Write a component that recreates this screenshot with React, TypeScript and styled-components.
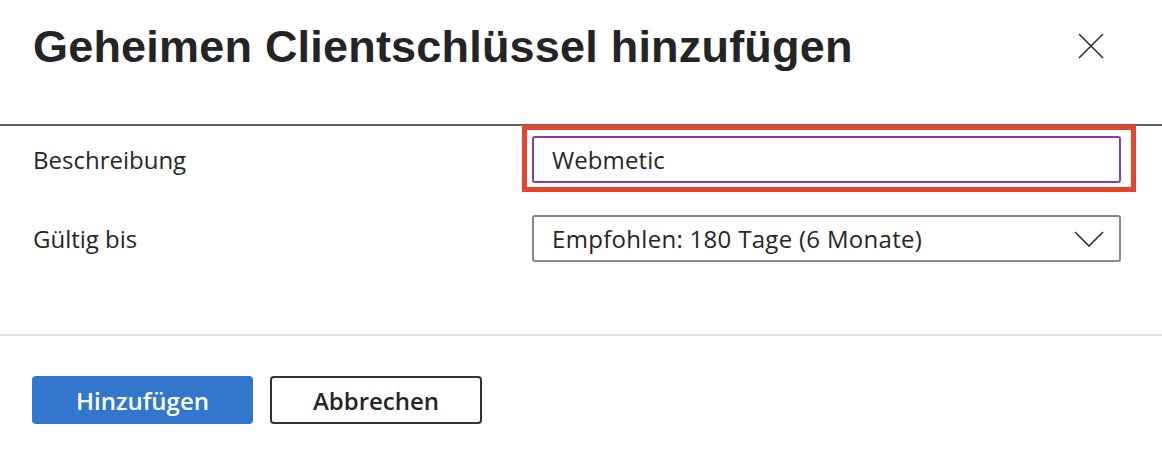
import React from "react";
import styled, { createGlobalStyle } from "styled-components";

const GlobalStyle = createGlobalStyle`
  html, body {
    margin: 0;
    padding: 0;
    background: #fff;
  }
  body {
    font-family: "Open Sans", "Noto Sans", sans-serif;
    color: #323130;
  }
`;

const Panel = styled.div`
  width: 1162px;
  height: 464px;
  background: #fff;
  overflow: hidden;
`;

const Header = styled.header`
  height: 126px;
  display: flex;
  align-items: flex-start;
  justify-content: space-between;
  padding: 0 58px 0 33px;
  box-sizing: border-box;
  border-bottom: 2px solid #626262;
`;

const Title = styled.h1`
  margin: 21px 0 0;
  font-family: "Liberation Sans", Arial, sans-serif;
  font-size: 45px;
  line-height: 52px;
  font-weight: 700;
  letter-spacing: 0.2px;
  color: #242424;
`;

const CloseButton = styled.button`
  margin-top: 33px;
  width: 26px;
  height: 26px;
  padding: 0;
  border: none;
  background: none;
  display: flex;
  align-items: center;
  justify-content: center;
  cursor: pointer;
`;

const Form = styled.div`
  display: flex;
  flex-direction: column;
  gap: 32px;
  padding: 10px 41px 0 33px;
  height: 210px;
  box-sizing: border-box;
  border-bottom: 2px solid #e1e1e1;
`;

const Row = styled.div`
  display: grid;
  grid-template-columns: 499px 1fr;
  align-items: center;
`;

const Label = styled.label`
  font-size: 24px;
  line-height: 32px;
  color: #262626;
`;

const FieldWrap = styled.div`
  position: relative;
`;

const Highlight = styled.div`
  position: absolute;
  top: -11px;
  left: -10px;
  right: -15px;
  bottom: -9px;
  border: 5px solid #e8432b;
  pointer-events: none;
`;

const TextInput = styled.input`
  display: block;
  width: 100%;
  height: 47px;
  box-sizing: border-box;
  padding: 0 18px;
  border: 2px solid #8a3ab0;
  border-radius: 3px;
  font-family: "Open Sans", "Noto Sans", sans-serif;
  font-size: 24px;
  letter-spacing: 0.1px;
  color: #262626;
  background: #fff;
  outline: none;
`;

const Select = styled.div`
  height: 47px;
  box-sizing: border-box;
  padding: 0 15px 0 18px;
  border: 2px solid #8a8886;
  border-radius: 3px;
  display: flex;
  align-items: center;
  justify-content: space-between;
  font-size: 24px;
  letter-spacing: 0.3px;
  color: #262626;
  cursor: pointer;
`;

const Footer = styled.footer`
  display: flex;
  gap: 17px;
  padding: 40px 33px 0 32px;
`;

const Button = styled.button<{ $primary?: boolean }>`
  height: 48px;
  width: ${(p) => (p.$primary ? 221 : 212)}px;
  box-sizing: border-box;
  border-radius: 4px;
  border: ${(p) => (p.$primary ? "none" : "2px solid #323130")};
  background: ${(p) => (p.$primary ? "#3277ce" : "#fff")};
  color: ${(p) => (p.$primary ? "#fff" : "#262626")};
  font-family: "Open Sans", "Noto Sans", sans-serif;
  font-size: 24px;
  font-weight: 600;
  cursor: pointer;
`;

export default function App() {
  return (
    <Panel>
      <GlobalStyle />
      <Header>
        <Title>Geheimen Clientschlüssel hinzufügen</Title>
        <CloseButton aria-label="Schließen">
          <svg width="26" height="26" viewBox="0 0 26 26">
            <path d="M1 1L25 25M25 1L1 25" stroke="#323130" strokeWidth="1.6" fill="none" />
          </svg>
        </CloseButton>
      </Header>
      <Form>
        <Row>
          <Label>Beschreibung</Label>
          <FieldWrap>
            <TextInput defaultValue="Webmetic" />
            <Highlight />
          </FieldWrap>
        </Row>
        <Row>
          <Label>Gültig bis</Label>
          <Select>
            <span>Empfohlen: 180 Tage (6 Monate)</span>
            <svg width="30" height="16" viewBox="0 0 30 16">
              <path d="M1 1L15 15L29 1" stroke="#323130" strokeWidth="1.6" fill="none" />
            </svg>
          </Select>
        </Row>
      </Form>
      <Footer>
        <Button $primary>Hinzufügen</Button>
        <Button>Abbrechen</Button>
      </Footer>
    </Panel>
  );
}
